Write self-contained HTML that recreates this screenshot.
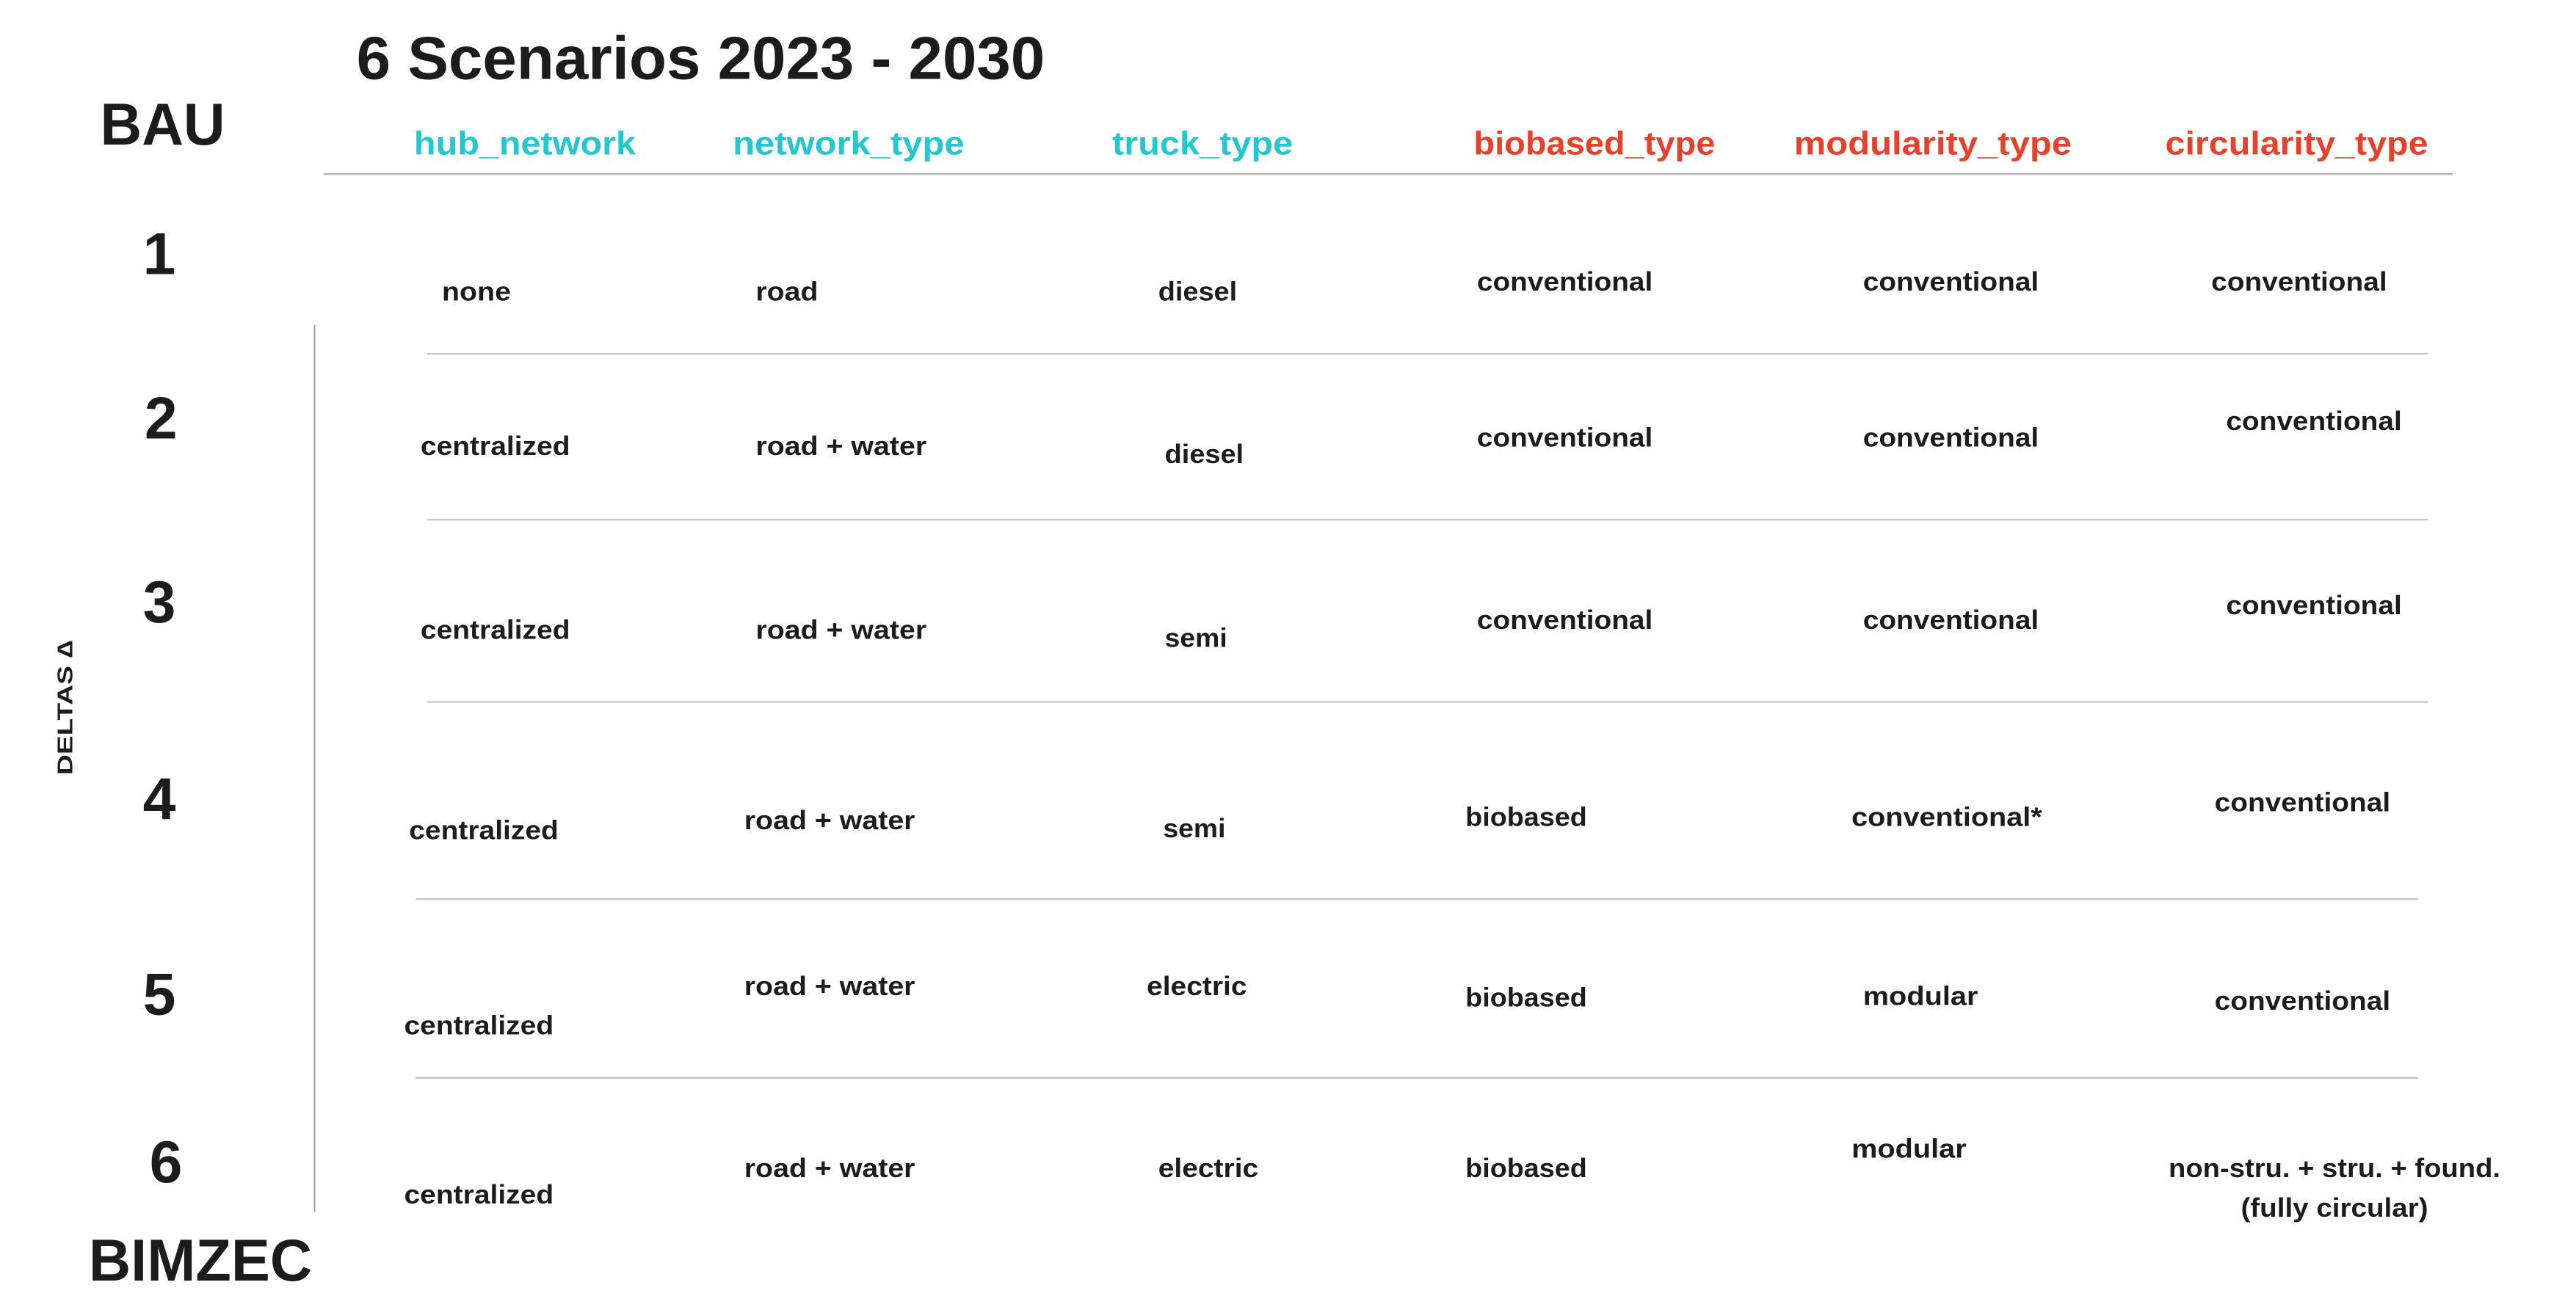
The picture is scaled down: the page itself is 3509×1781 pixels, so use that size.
<!DOCTYPE html>
<html><head><meta charset="utf-8"><style>
html,body{margin:0;padding:0;background:#fff;width:3509px;height:1781px;overflow:hidden}
svg{display:block}
text{font-family:"Liberation Sans",sans-serif;font-weight:bold;fill:#1c1c1c}
.h{font-size:20px}
.c{fill:#22c7cf}
.r{fill:#e8412b}
.t{font-size:16px}
.n{font-size:36px}
</style></head><body>
<svg width="3509" height="1781" viewBox="0 0 1568 796" xmlns="http://www.w3.org/2000/svg" preserveAspectRatio="none">
<rect width="1568" height="796" fill="#fff"/>
<text x="217" y="48" font-size="37" textLength="419" lengthAdjust="spacingAndGlyphs">6 Scenarios 2023 - 2030</text>
<text x="61" y="88" class="n" textLength="76" lengthAdjust="spacingAndGlyphs">BAU</text>
<text x="252" y="94" class="h c" textLength="135" lengthAdjust="spacingAndGlyphs">hub_network</text>
<text x="446" y="94" class="h c" textLength="141" lengthAdjust="spacingAndGlyphs">network_type</text>
<text x="677" y="94" class="h c" textLength="110" lengthAdjust="spacingAndGlyphs">truck_type</text>
<text x="897" y="94" class="h r" textLength="147" lengthAdjust="spacingAndGlyphs">biobased_type</text>
<text x="1092" y="94" class="h r" textLength="169" lengthAdjust="spacingAndGlyphs">modularity_type</text>
<text x="1318" y="94" class="h r" textLength="160" lengthAdjust="spacingAndGlyphs">circularity_type</text>
<line x1="197" y1="106" x2="1493" y2="106" stroke="#b0b0b0" stroke-width="1"/>
<g stroke="#c4c4c4" stroke-width="1">
<line x1="260" y1="215.5" x2="1478" y2="215.5"/>
<line x1="260" y1="316.5" x2="1478" y2="316.5"/>
<line x1="260" y1="427.5" x2="1478" y2="427.5"/>
<line x1="253" y1="547.5" x2="1472" y2="547.5"/>
<line x1="253" y1="656.5" x2="1472" y2="656.5"/>
</g>
<line x1="191.5" y1="198" x2="191.5" y2="738" stroke="#999" stroke-width="0.8"/>
<text x="97" y="167" class="n" text-anchor="middle">1</text>
<text x="98" y="267" class="n" text-anchor="middle">2</text>
<text x="97" y="379" class="n" text-anchor="middle">3</text>
<text x="97" y="499" class="n" text-anchor="middle">4</text>
<text x="97" y="618" class="n" text-anchor="middle">5</text>
<text x="101" y="720" class="n" text-anchor="middle">6</text>
<text x="54" y="780" class="n" textLength="136" lengthAdjust="spacingAndGlyphs">BIMZEC</text>
<text transform="translate(44,472) rotate(-90)" font-size="13" textLength="82" lengthAdjust="spacingAndGlyphs">DELTAS ∆</text>
<g class="t">
<text class="t" x="269" y="183" textLength="42" lengthAdjust="spacingAndGlyphs">none</text>
<text class="t" x="460" y="183" textLength="38" lengthAdjust="spacingAndGlyphs">road</text>
<text class="t" x="705" y="183" textLength="48" lengthAdjust="spacingAndGlyphs">diesel</text>
<text class="t" x="899" y="177" textLength="107" lengthAdjust="spacingAndGlyphs">conventional</text>
<text class="t" x="1134" y="177" textLength="107" lengthAdjust="spacingAndGlyphs">conventional</text>
<text class="t" x="1346" y="177" textLength="107" lengthAdjust="spacingAndGlyphs">conventional</text>

<text class="t" x="256" y="277" textLength="91" lengthAdjust="spacingAndGlyphs">centralized</text>
<text class="t" x="460" y="277" textLength="104" lengthAdjust="spacingAndGlyphs">road + water</text>
<text class="t" x="709" y="282" textLength="48" lengthAdjust="spacingAndGlyphs">diesel</text>
<text class="t" x="899" y="272" textLength="107" lengthAdjust="spacingAndGlyphs">conventional</text>
<text class="t" x="1134" y="272" textLength="107" lengthAdjust="spacingAndGlyphs">conventional</text>
<text class="t" x="1355" y="262" textLength="107" lengthAdjust="spacingAndGlyphs">conventional</text>

<text class="t" x="256" y="389" textLength="91" lengthAdjust="spacingAndGlyphs">centralized</text>
<text class="t" x="460" y="389" textLength="104" lengthAdjust="spacingAndGlyphs">road + water</text>
<text class="t" x="709" y="394" textLength="38" lengthAdjust="spacingAndGlyphs">semi</text>
<text class="t" x="899" y="383" textLength="107" lengthAdjust="spacingAndGlyphs">conventional</text>
<text class="t" x="1134" y="383" textLength="107" lengthAdjust="spacingAndGlyphs">conventional</text>
<text class="t" x="1355" y="374" textLength="107" lengthAdjust="spacingAndGlyphs">conventional</text>

<text class="t" x="249" y="511" textLength="91" lengthAdjust="spacingAndGlyphs">centralized</text>
<text class="t" x="453" y="505" textLength="104" lengthAdjust="spacingAndGlyphs">road + water</text>
<text class="t" x="708" y="510" textLength="38" lengthAdjust="spacingAndGlyphs">semi</text>
<text class="t" x="892" y="503" textLength="74" lengthAdjust="spacingAndGlyphs">biobased</text>
<text class="t" x="1127" y="503" textLength="116" lengthAdjust="spacingAndGlyphs">conventional*</text>
<text class="t" x="1348" y="494" textLength="107" lengthAdjust="spacingAndGlyphs">conventional</text>

<text class="t" x="246" y="630" textLength="91" lengthAdjust="spacingAndGlyphs">centralized</text>
<text class="t" x="453" y="606" textLength="104" lengthAdjust="spacingAndGlyphs">road + water</text>
<text class="t" x="698" y="606" textLength="61" lengthAdjust="spacingAndGlyphs">electric</text>
<text class="t" x="892" y="613" textLength="74" lengthAdjust="spacingAndGlyphs">biobased</text>
<text class="t" x="1134" y="612" textLength="70" lengthAdjust="spacingAndGlyphs">modular</text>
<text class="t" x="1348" y="615" textLength="107" lengthAdjust="spacingAndGlyphs">conventional</text>

<text class="t" x="246" y="733" textLength="91" lengthAdjust="spacingAndGlyphs">centralized</text>
<text class="t" x="453" y="717" textLength="104" lengthAdjust="spacingAndGlyphs">road + water</text>
<text class="t" x="705" y="717" textLength="61" lengthAdjust="spacingAndGlyphs">electric</text>
<text class="t" x="892" y="717" textLength="74" lengthAdjust="spacingAndGlyphs">biobased</text>
<text class="t" x="1127" y="705" textLength="70" lengthAdjust="spacingAndGlyphs">modular</text>
<text class="t" x="1320" y="717" textLength="202" lengthAdjust="spacingAndGlyphs">non-stru. + stru. + found.</text>
<text class="t" x="1364" y="741" textLength="114" lengthAdjust="spacingAndGlyphs">(fully circular)</text>
</g>
</svg>
</body></html>
